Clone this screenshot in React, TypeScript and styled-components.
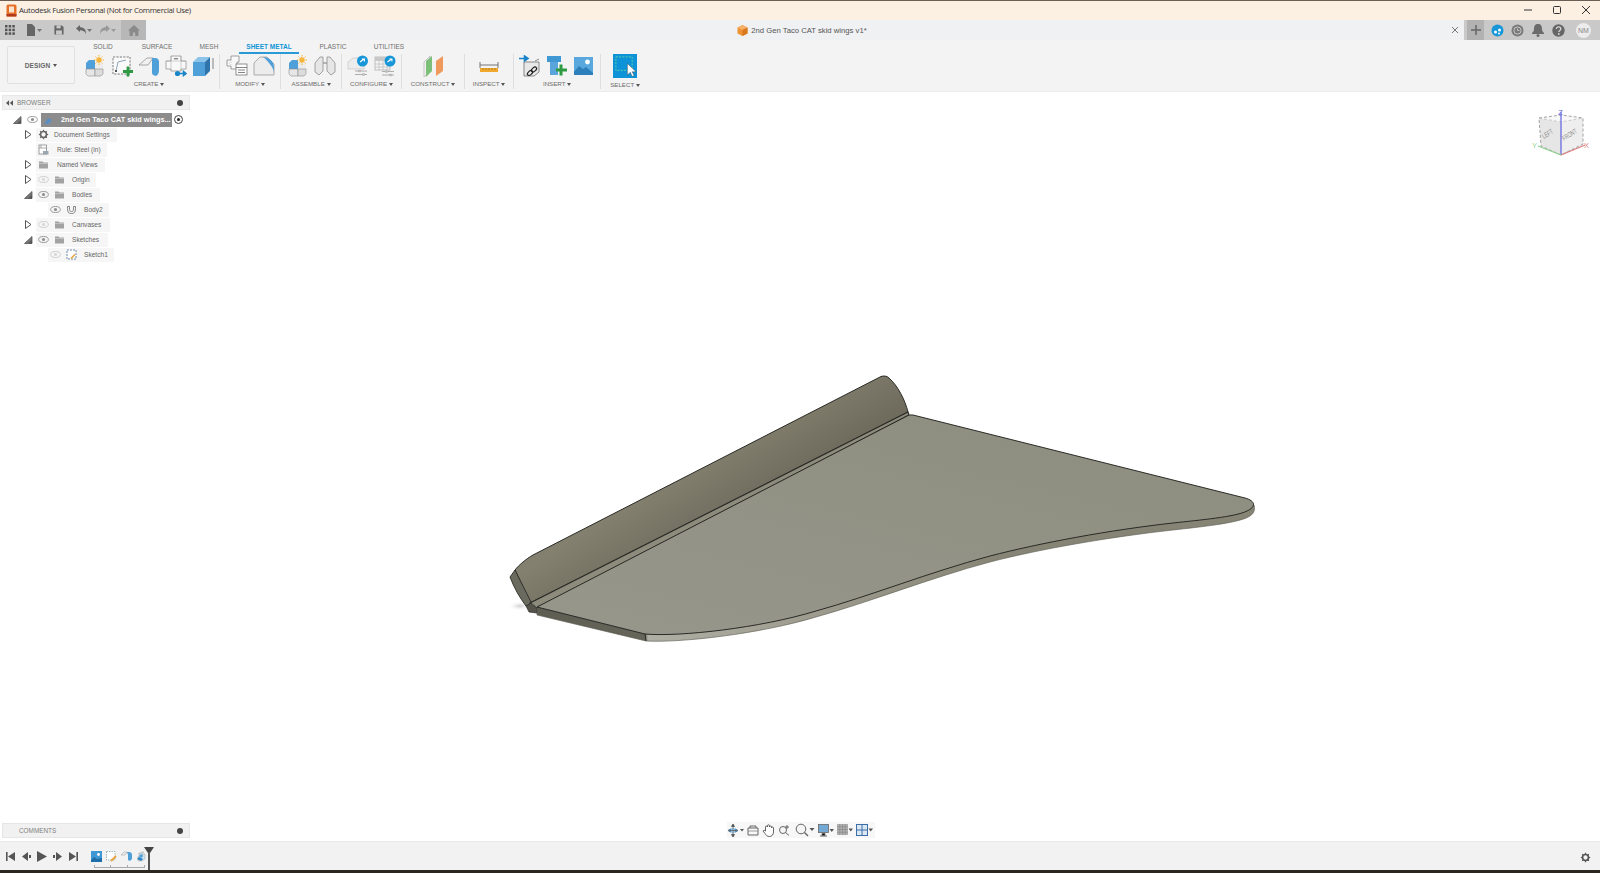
import React from "react";
import styled, { createGlobalStyle } from "styled-components";

const Global = createGlobalStyle`
  html, body { margin: 0; padding: 0; width: 1600px; height: 873px; overflow: hidden; background: #fff; }
  * { box-sizing: border-box; }
  #root { width: 1600px; height: 873px; }
`;

const UI = `"Liberation Sans", Arial, sans-serif`;

const Page = styled.div`
  width: 1600px; height: 873px; display: flex; flex-direction: column;
  font-family: ${UI}; background: #fff; overflow: hidden;
`;

/* ---------- title bar ---------- */
const TitleBar = styled.div`
  height: 20px; flex: none; display: flex; align-items: center; padding: 0 0 1px 6px; gap: 2px;
  background: #fcf0e3; border-top: 1px solid #6b5f55;
`;
const TitleText = styled.span`
  font-family: "Open Sans", sans-serif; font-size: 7.8px; letter-spacing: -.33px; color: #333; flex: 1; white-space: nowrap;
`;
const WinGroup = styled.div`
  display: flex; flex: none;
`;
const WinBtn = styled.div`
  width: 29px; height: 18px; display: flex; align-items: center; justify-content: center;
`;

/* ---------- menu bar ---------- */
const MenuBar = styled.div`
  height: 20px; flex: none; display: flex; background: #c9c9c9;
`;
const MenuLeft = styled.div`
  width: 121px; display: flex; align-items: center; padding-left: 5px;
`;
const MenuIcon = styled.div<{ $w: number }>`
  width: ${(p) => p.$w}px; height: 20px; display: flex; align-items: center; justify-content: flex-start; flex: none;
`;
const HomeTab = styled.div`
  width: 25px; background: #b7b7b7; display: flex; align-items: center; justify-content: center;
`;
const DocTab = styled.div`
  flex: 1; background: #f0f1f3; display: flex; align-items: center; position: relative; justify-content: center; padding-right: 6px; gap: 3px;
`;
const DocTitle = styled.span`
  font-size: 7.7px; color: #555;
`;
const DocClose = styled.div`
  position: absolute; right: 3px; top: 6px; width: 10px; height: 10px; display: flex;
`;
const MenuRight = styled.div`
  width: 136px; display: flex; align-items: center; padding-left: 3px;
`;
const PlusBox = styled.div`
  width: 17px; height: 20px; background: #b2b2b2; display: flex; align-items: center; justify-content: center; margin-right: 3px;
`;
const RoundSlot = styled.div`
  width: 20.5px; display: flex; align-items: center; justify-content: center; flex: none;
`;
const Avatar = styled.div`
  width: 15px; height: 15px; border-radius: 50%; background: #ececec; color: #888; font-size: 7px;
  display: flex; align-items: center; justify-content: center; margin-left: 7px;
`;

/* ---------- ribbon ---------- */
const Ribbon = styled.div`
  height: 52px; flex: none; display: flex; background: #f3f3f3; border-bottom: 1px solid #ececec;
`;
const DesignBtn = styled.div`
  width: 68px; height: 38px; margin: 6px 4px 0 7px; border: 1px solid #e0e0e0; border-radius: 2px; background: #f4f4f4;
  display: flex; align-items: center; justify-content: center; gap: 3px;
  font-size: 6.5px; font-weight: 700; letter-spacing: .1px; color: #666;
`;
const Caret = styled.span`
  display: inline-block; width: 0; height: 0; border-left: 2.2px solid transparent; border-right: 2.2px solid transparent;
  border-top: 3px solid #555; margin-left: 0; vertical-align: middle;
`;
const RibbonBody = styled.div`
  flex: 1; display: flex; flex-direction: column;
`;
const Tabs = styled.div`
  height: 14px; display: flex; padding-left: 6px;
`;
const Tab = styled.div<{ $w: number; $gap?: number; $active?: boolean }>`
  width: ${(p) => p.$w}px; height: 14px; padding-top: 2px; text-align: center; font-size: 6.5px; line-height: 9px;
  margin-left: ${(p) => p.$gap ?? 0}px; white-space: nowrap;
  color: ${(p) => (p.$active ? "#0d96d6" : "#6f6f6f")}; font-weight: ${(p) => (p.$active ? 700 : 400)};
  border-bottom: ${(p) => (p.$active ? "2px solid #2a9ad6" : "none")};
`;
const Groups = styled.div`
  display: flex; height: 37px;
`;
const Group = styled.div<{ $w: number; $last?: boolean }>`
  width: ${(p) => p.$w}px; display: flex; flex-direction: column; align-items: center;
  border-right: ${(p) => (p.$last ? "none" : "1px solid #dedede")};
  margin-bottom: 2px;
`;
const GroupIcons = styled.div`
  height: 24px; display: flex; align-items: center; gap: 5px;
`;
const GroupLabel = styled.div`
  font-size: 6.2px; line-height: 10px; color: #6d6d6d; white-space: nowrap; margin-top: 2px;
`;
const Tool = styled.svg`
  width: 22px; height: 22px; flex: none; display: block;
`;
const BigTool = styled.svg`
  width: 24px; height: 24px; flex: none; display: block;
`;

/* ---------- canvas ---------- */
const Canvas = styled.div`
  flex: 1; position: relative; background: #fff;
`;
const WingSvg = styled.svg`
  position: absolute; left: 0; top: 0; width: 1600px; height: 749px;
`;
const Panel = styled.div`
  position: absolute; left: 2px; width: 188px; height: 15px; background: #f1f1f1; border: 1px solid #e6e6e6;
  display: flex; align-items: center; font-size: 6.4px; color: #7f7f7f;
`;
const BrowserWrap = styled.div`
  position: absolute; left: 2px; top: 3px; width: 190px;
`;
const BrowserHead = styled.div`
  width: 188px; height: 15px; background: #f1f1f1; border: 1px solid #e8e8e8; margin-bottom: 2px;
  display: flex; align-items: center; padding: 0 6px 0 3px; font-size: 6.5px; color: #7f7f7f; gap: 4px;
`;
const HeadText = styled.span`
  flex: 1;
`;
const Dot = styled.div`
  width: 6px; height: 6px; border-radius: 50%; background: #444; flex: none;
`;
const Row = styled.div<{ $indent: number }>`
  height: 15px; display: flex; align-items: center; padding-left: ${(p) => p.$indent}px;
`;
const Expander = styled.div<{ $w?: number }>`
  width: ${(p) => p.$w ?? 14}px; height: 15px; display: flex; align-items: center; flex: none; padding-left: 1px;
`;
const Chip = styled.div<{ $w: number; $labelAt: number }>`
  width: ${(p) => p.$w}px; height: 14px; background: #f6f6f6; display: grid;
  grid-template-columns: ${(p) => p.$labelAt}px 1fr; align-items: center;
  font-size: 6.6px; color: #666; white-space: nowrap;
`;
const ChipIcons = styled.div`
  display: flex; align-items: center; gap: 5px; padding-left: 2px;
`;
const Root = styled.div`
  height: 14px; width: 131px; background: #8c8c8c; color: #fff; font-size: 7.3px; font-weight: 700; margin-left: 3px;
  display: flex; align-items: center; padding-left: 20px; white-space: nowrap; position: relative;
`;
const RootBadge = styled.svg`
  position: absolute; left: 2px; top: 2px; width: 10px; height: 10px;
`;
const Radio = styled.div`
  width: 9px; height: 9px; border: 1px solid #444; border-radius: 50%; display: flex; align-items: center; justify-content: center; background: #fafafa; margin-left: 2px;
`;
const RadioDot = styled.div`
  width: 3px; height: 3px; background: #222; border-radius: 50%;
`;
const Small = styled.svg`
  width: 11px; height: 11px; flex: none; display: block;
`;
const CubeSvg = styled.svg`
  position: absolute; right: 8px; top: 12px; width: 66px; height: 60px;
`;
const NavBar = styled.div`
  position: absolute; left: 727px; bottom: 3px; width: 148px; height: 16px; background: #f7f7f7;
  display: flex; align-items: center; padding-left: 1px; gap: 3px;
`;
const NavItem = styled.div`
  display: flex; align-items: center; flex: none;
`;
const Comments = styled(Panel)`
  bottom: 3px; padding: 0 6px 0 16px; gap: 5px;
`;

/* ---------- timeline ---------- */
const Timeline = styled.div`
  height: 29px; flex: none; background: #f2f2f2; border-top: 1px solid #e8e8e8; display: flex; align-items: center; padding-left: 3px; position: relative;
`;
const Play = styled.div`
  width: 15.6px; display: flex; align-items: center; justify-content: center; flex: none;
`;
const Steps = styled.div`
  display: flex; gap: 4px; margin-left: 10px; position: relative;
`;
const Bracket = styled.div`
  position: absolute; left: 3px; right: 2px; top: 14px; height: 3px; border: 1px solid #aaa; border-top: none;
  background-image: linear-gradient(#aaa, #aaa), linear-gradient(#aaa, #aaa);
  background-size: 1px 3px, 1px 3px;
  background-position: 32% 0, 66% 0;
  background-repeat: no-repeat;
`;
const Marker = styled.svg`
  position: absolute; left: 144px; top: 4px; width: 10px; height: 24px;
`;
const GearSlot = styled.div`
  position: absolute; right: 8px; top: 10px; width: 12px; height: 12px; display: flex;
`;
const TaskStrip = styled.div`
  height: 3px; flex: none; background: #2b2620;
`;

/* ---------- small drawings ---------- */
const EyeIcon = ({ dim }: { dim?: boolean }) => (
  <Small viewBox="0 0 11 11">
    <ellipse cx="5.5" cy="5.5" rx="4.8" ry="3" fill="none" stroke={dim ? "#cfcfcf" : "#9a9a9a"} strokeWidth="1" />
    <circle cx="5.5" cy="5.5" r="1.6" fill={dim ? "#d8d8d8" : "#8f8f8f"} />
  </Small>
);
const Folder = () => (
  <Small viewBox="0 0 11 11">
    <path d="M1 2.5h3.5l1 1H10v6H1z" fill="#a2a2a2" />
    <path d="M1 4.5h9" stroke="#d5d5d5" strokeWidth=".6" />
  </Small>
);
const Closed = () => (
  <Small viewBox="0 0 11 11">
    <path d="M2.5 1.5v8l5.5-4z" fill="#fff" stroke="#555" strokeWidth="1" />
  </Small>
);
const Opened = () => (
  <Small viewBox="0 0 11 11">
    <path d="M1.5 9.5L9 2.5v7z" fill="#777" stroke="#555" strokeWidth=".8" />
    <path d="M5 9.5L9 5.8v3.7z" fill="#555" />
  </Small>
);
const Gear = ({ c = "#666" }: { c?: string }) => (
  <Small viewBox="0 0 11 11">
    <circle cx="5.5" cy="5.5" r="3" fill="none" stroke={c} strokeWidth="1.7" />
    <path d="M5.5 .8v1.6M5.5 8.6v1.6M.8 5.5h1.6M8.6 5.5h1.6M2.2 2.2l1.1 1.1M7.7 7.7l1.1 1.1M8.8 2.2L7.7 3.3M3.3 7.7L2.2 8.8" stroke={c} strokeWidth="1.2" />
  </Small>
);

const NewComp = () => (
  <Tool viewBox="0 0 22 22">
    <path d="M11 7.500h8v6.500h-8z" fill="#ececec" />
    <path d="M2 8l3-3h6v9H2z" fill="#4f9fd9" />
    <path d="M2 14h9v7H4l-2-2z" fill="#e6e6e6" stroke="#8f8f8f" strokeWidth=".6" />
    <path d="M11 14h8v5l-2 2h-6z" fill="#dcdcdc" stroke="#8f8f8f" strokeWidth=".6" />
    <circle cx="15" cy="5" r="2.700" fill="#f5b43a" />
    <path d="M15 0v1.500M15 8.500V10M10 5h1.500M18.500 5H20M11.500 1.500l1 1M17.500 7.500l1 1M18.500 1.500l-1 1M12.500 7.500l-1 1" stroke="#f5b43a" strokeWidth="1" />
  </Tool>
);

const Icons = {
  sketch: (
    <Tool viewBox="0 0 22 22">
      <rect x="2" y="2" width="17" height="17" fill="#fafafa" stroke="#6e6e6e" strokeWidth=".9" strokeDasharray="2.2 1.2" />
      <path d="M5 16L7 7 15 5" fill="none" stroke="#8fa6b6" strokeWidth="1" />
      <rect x="4" y="15" width="2" height="2" fill="#555" />
      <path d="M17 11.5v10M12 16.5h10" stroke="#2d9a42" strokeWidth="2.8" />
    </Tool>
  ),
  flange: (
    <Tool viewBox="0 0 22 22">
      <path d="M1 10l8-7h6l-5 7z" fill="#f1f1f1" stroke="#888" strokeWidth=".7" />
      <path d="M14 3h3c3 0 4 2 4 4v8c0 3-1 5-3 6l-3-1c-1-1-1-2-1-4V9c0-3 0-5 0-6z" fill="#4f9fd9" />
    </Tool>
  ),
  unfold: (
    <Tool viewBox="0 0 22 22">
      <path d="M6 1h10v5h5v8h-5v2H6v-2H1V6h5z" fill="#f8f8f8" stroke="#8a8a8a" strokeWidth=".7" />
      <path d="M1 6h20M6 1v15M16 1v15" stroke="#a8a8a8" strokeWidth=".5" />
      <rect x="9" y="3" width="4" height="1.4" fill="#888" />
      <circle cx="12.5" cy="18.5" r="2.6" fill="#1b85c9" />
      <path d="M14 18.5h7M21 18.5l-2.5-2v4z" stroke="#1b85c9" strokeWidth="1.6" fill="#1b85c9" />
    </Tool>
  ),
  box: (
    <Tool viewBox="0 0 22 22">
      <path d="M1 7h12v14H1z" fill="#4f9fd9" />
      <path d="M1 7l5-5h12l-5 5z" fill="#8cc4ea" />
      <path d="M13 7l5-5v14l-5 5z" fill="#2f75ab" />
      <path d="M21 3v11" stroke="#777" strokeWidth=".9" />
    </Tool>
  ),
  flat: (
    <Tool viewBox="0 0 22 22">
      <path d="M5 1h8v6h-2v7H5v-3H1V5h4z" fill="#f8f8f8" stroke="#8a8a8a" strokeWidth=".8" />
      <path d="M5 5v6M1 8h4" stroke="#aaa" strokeWidth=".5" strokeDasharray="1 1" />
      <rect x="10" y="9" width="11" height="11" fill="#fff" stroke="#777" strokeWidth=".8" />
      <path d="M10 12.5h11M12 15h7M12 17.5h7" stroke="#777" strokeWidth=".9" />
    </Tool>
  ),
  corner: (
    <Tool viewBox="0 0 22 22">
      <path d="M1 20V8l6-6h7l7 7v11z" fill="#ececec" stroke="#9a9a9a" strokeWidth=".8" />
      <path d="M10 2c6 0 11 4 11 11v4c-1-5-6-11-11-15z" fill="#4f9fd9" />
    </Tool>
  ),
  joint: (
    <Tool viewBox="0 0 22 22">
      <path d="M1 8l5-6h3v14l-4 4-4-3z" fill="#e6e6e6" stroke="#8d8d8d" strokeWidth=".8" />
      <path d="M21 8l-5-6h-3v14l4 4 4-3z" fill="#e6e6e6" stroke="#8d8d8d" strokeWidth=".8" />
      <path d="M9 8h4" stroke="#9a9a9a" strokeWidth="1.4" />
    </Tool>
  ),
  cfg1: (
    <Tool viewBox="0 0 22 22">
      <path d="M1 7l5-4h11v11H1z" fill="#ececec" stroke="#c4c4c4" strokeWidth=".7" />
      <path d="M8 16h12M8 19.5h12" stroke="#9b9b9b" strokeWidth=".8" />
      <rect x="11" y="14.8" width="3" height="2.4" fill="#bcbcbc" />
      <rect x="15" y="18.3" width="3" height="2.4" fill="#bcbcbc" />
      <circle cx="15.5" cy="6" r="5.5" fill="#1796d8" />
      <path d="M13 7l4-3M15 4h2.4v2.4" stroke="#fff" strokeWidth="1.1" fill="none" />
    </Tool>
  ),
  cfg2: (
    <Tool viewBox="0 0 22 22">
      <rect x="1" y="2" width="15" height="13" fill="#f3f3f3" stroke="#aaa" strokeWidth=".7" />
      <path d="M1 5.5h15M1 9h15M1 12h15M5 2v13M9 2v13M13 2v13" stroke="#b5b5b5" strokeWidth=".6" />
      <rect x="1" y="2" width="15" height="3.4" fill="#c8c8c8" />
      <path d="M8 16.5h12M8 20h12" stroke="#9b9b9b" strokeWidth=".8" />
      <rect x="11" y="15.3" width="3" height="2.4" fill="#bcbcbc" />
      <rect x="15" y="18.8" width="3" height="2.4" fill="#bcbcbc" />
      <circle cx="16" cy="6" r="5.5" fill="#1796d8" />
      <path d="M13.5 7l4-3M15.5 4h2.4v2.4" stroke="#fff" strokeWidth="1.1" fill="none" />
    </Tool>
  ),
  planes: (
    <Tool viewBox="0 0 22 22">
      <path d="M2 7l6-6v15l-6 6z" fill="#f1f1f1" stroke="#aaa" strokeWidth=".6" />
      <path d="M4 6l6-5v15l-6 6z" fill="#7bbf79" />
      <path d="M14 6l7-5v15l-7 5z" fill="#ef9a5c" />
    </Tool>
  ),
  ruler: (
    <Tool viewBox="0 0 22 22">
      <path d="M2 7v6M20 7v6M2 10h18" stroke="#666" strokeWidth=".9" />
      <rect x="2" y="13" width="18" height="4" fill="#f0a92e" />
      <path d="M5 13v2M8 13v2M11 13v2M14 13v2M17 13v2" stroke="#9a6d16" strokeWidth=".6" />
    </Tool>
  ),
  deriveLink: (
    <Tool viewBox="0 0 22 22">
      <path d="M5 7h15v10l-5 4H5z" fill="#e8e8e8" stroke="#6f6f6f" strokeWidth=".8" />
      <path d="M0 3.5h9M9 3.5L5.5 1v5z" stroke="#1b85c9" fill="#1b85c9" strokeWidth="1.6" />
      <path d="M16 6l4-2" stroke="#6f6f6f" strokeWidth=".8" />
      <ellipse cx="11" cy="18" rx="3" ry="1.8" transform="rotate(-40 11 18)" fill="none" stroke="#222" strokeWidth="1.2" />
      <ellipse cx="15" cy="14.5" rx="3" ry="1.8" transform="rotate(-40 15 14.5)" fill="none" stroke="#222" strokeWidth="1.2" />
    </Tool>
  ),
  bolt: (
    <Tool viewBox="0 0 22 22">
      <path d="M1 1h14v6H1z" fill="#3f97d4" />
      <path d="M4 7h8v13H4z" fill="#5ba5dd" />
      <path d="M15 9.5v11M10 15h11" stroke="#2d9a42" strokeWidth="3" />
    </Tool>
  ),
  image: (
    <Tool viewBox="0 0 22 22">
      <rect x="1" y="2" width="19" height="18" fill="#58a7dd" />
      <circle cx="14.5" cy="7" r="2.4" fill="#fff" />
      <path d="M1 17l5-6 4 3 3-2 7 6v2H1z" fill="#2c7fba" />
    </Tool>
  ),
};

const Wing = () => (
  <WingSvg viewBox="0 92 1600 749">
    <defs>
      <linearGradient id="plate" x1="0.1" y1="1" x2="0.9" y2="0">
        <stop offset="0" stopColor="#96968b" />
        <stop offset="1" stopColor="#8d8d7f" />
      </linearGradient>
      <linearGradient id="flange" gradientUnits="userSpaceOnUse" x1="690" y1="465" x2="725" y2="520">
        <stop offset="0" stopColor="#84806f" />
        <stop offset="1" stopColor="#6f6c5e" />
      </linearGradient>
      <linearGradient id="strip" gradientUnits="userSpaceOnUse" x1="540" y1="0" x2="1000" y2="0">
        <stop offset="0" stopColor="#5f5e53" />
        <stop offset="0.228" stopColor="#66655a" />
        <stop offset="0.235" stopColor="#b0afa4" />
        <stop offset="1" stopColor="#868575" />
      </linearGradient>
      <radialGradient id="shadow">
        <stop offset="0" stopColor="#cfcfcf" />
        <stop offset="1" stopColor="#ffffff" stopOpacity="0" />
      </radialGradient>
    </defs>
    <ellipse cx="520" cy="606" rx="12" ry="5" fill="url(#shadow)" />
    <path d="M515 570C519 565 526 559 533 555L881 376.5C884 375.5 887 376 889 378C898 386 905 400 908 412L530 603Z" fill="url(#flange)" stroke="#2a2a26" strokeWidth="1" strokeLinejoin="round" />
    <path d="M515 570L510 577C514 588 520 598 526 606L532 604Z" fill="#6a6a5f" stroke="#2a2a26" strokeWidth=".9" strokeLinejoin="round" />
    <path d="M530 603L908 412L909 415L537 608L530 607Z" fill="#8d8c7c" stroke="#2a2a26" strokeWidth="1.100" strokeLinejoin="round" />
    <path d="M526 606L531 603L537 608L537 613L529 612Z" fill="#55544b" stroke="#2a2a26" strokeWidth=".7" />
    <path d="M537 607L537 615L646 641C680 643 760 634 816 617C870 602 930 578 990 562C1040 549 1110 537 1173 530C1200 527 1240 523 1250 516C1255 513 1255 508 1254 505L1240 505L1000 540L646 630Z" fill="url(#strip)" stroke="#55554c" strokeWidth=".6" strokeLinejoin="round" />
    <path d="M537 607L645 634C680 637 760 628 816 611C870 596 930 572 990 556C1040 543 1110 530 1173 523C1200 520 1235 517 1247 511C1256 507 1256 501 1245 498L913 415L909 415Z" fill="url(#plate)" stroke="#2a2a26" strokeWidth="1" strokeLinejoin="round" />
    <path d="M645 634L646 641" stroke="#2a2a26" strokeWidth="1" />
  </WingSvg>
);

const ViewCube = () => (
  <CubeSvg viewBox="1526 104 66 60">
    <path d="M1561 122L1583 118V144L1561 155Z" fill="#eeeeee" />
    <path d="M1561 122L1539 118L1541 146L1561 155Z" fill="#e6e6e6" />
    <path d="M1539 118L1561 115L1583 118L1561 122Z" fill="#f8f8f8" />
    <path d="M1539 118L1561 115L1583 118V144L1561 155L1541 146Z" fill="none" stroke="#999" strokeWidth=".9" strokeDasharray="3 2" />
    <path d="M1539 118L1561 122L1583 118" fill="none" stroke="#aaa" strokeWidth=".6" strokeDasharray="3 2" />
    <path d="M1561 112V155" stroke="#6b6ce0" strokeWidth="1.300" />
    <path d="M1561 155L1585 145" stroke="#d87b7b" strokeWidth="1.300" />
    <path d="M1561 155L1538 146" stroke="#8ed08e" strokeWidth="1.300" />
    <text x="1558" y="115" fontSize="8" fill="#6b6ce0" fontFamily="Liberation Sans">Z</text>
    <text x="1584" y="148" fontSize="7.500" fill="#dd8a8a" fontFamily="Liberation Sans">X</text>
    <text x="1532" y="148" fontSize="7.500" fill="#92d692" fontFamily="Liberation Sans">Y</text>
    <text fontSize="5.500" fill="#8f8f8f" fontFamily="Liberation Sans" transform="translate(1544 139) rotate(-33) scale(.85 1.300)">LEFT</text>
    <text fontSize="5.500" fill="#8f8f8f" fontFamily="Liberation Sans" transform="translate(1564 141) rotate(-32) scale(.85 1.300)">FRONT</text>
  </CubeSvg>
);

const rows: { label: string; w: number; at: number; indent: number; exp?: "c" | "o"; eye?: "on" | "dim"; icon: React.ReactNode }[] = [
  { label: "Document Settings", w: 81, at: 18, indent: 22, exp: "c", icon: <Gear /> },
  {
    label: "Rule: Steel (in)", w: 71, at: 21, indent: 22, icon: (
      <Small viewBox="0 0 11 11">
        <rect x="1" y="1" width="7.5" height="9" fill="#fff" stroke="#888" strokeWidth=".8" />
        <path d="M1 4h7.5M3 1v3" stroke="#888" strokeWidth=".7" />
        <rect x="5" y="7" width="5.5" height="3.5" fill="#9aa7b3" />
      </Small>
    ),
  },
  { label: "Named Views", w: 69, at: 21, indent: 22, exp: "c", icon: <Folder /> },
  { label: "Origin", w: 60, at: 36, indent: 22, exp: "c", eye: "dim", icon: <Folder /> },
  { label: "Bodies", w: 64, at: 36, indent: 22, exp: "o", eye: "on", icon: <Folder /> },
  {
    label: "Body2", w: 61, at: 36, indent: 48, eye: "on", icon: (
      <Small viewBox="0 0 11 11">
        <path d="M1.5 2.5C1.5 8 2 9.5 5.5 9.5S9.5 8 9.5 2.5H7.5c0 4 0 5-2 5s-2-1-2-5z" fill="#f3f3f3" stroke="#777" strokeWidth=".9" />
      </Small>
    ),
  },
  { label: "Canvases", w: 74, at: 36, indent: 22, exp: "c", eye: "dim", icon: <Folder /> },
  { label: "Sketches", w: 72, at: 36, indent: 22, exp: "o", eye: "on", icon: <Folder /> },
  {
    label: "Sketch1", w: 66, at: 36, indent: 48, eye: "dim", icon: (
      <Small viewBox="0 0 11 11">
        <rect x="1" y="1" width="9" height="9" fill="#fff" stroke="#4c6e9c" strokeWidth=".8" strokeDasharray="2 1" />
        <path d="M5 9.5l4-4" stroke="#e8a33a" strokeWidth="1.6" />
      </Small>
    ),
  },
];

export default function App() {
  return (
    <Page>
      <Global />
      <TitleBar>
        <svg width="11" height="13" viewBox="0 0 11 13">
          <rect x=".5" y=".5" width="10" height="12" rx="1.5" fill="#e5702a" />
          <rect x="3" y="2.5" width="5" height="6" fill="#fbe4cf" />
          <rect x=".5" y="10" width="10" height="2.5" fill="#b23a18" />
        </svg>
        <TitleText>Autodesk Fusion Personal (Not for Commercial Use)</TitleText>
        <WinGroup>
          <WinBtn>
            <svg width="10" height="10"><path d="M1 5h8" stroke="#333" strokeWidth="1" /></svg>
          </WinBtn>
          <WinBtn>
            <svg width="10" height="10"><rect x="1.500" y="1.500" width="7" height="7" rx="1" fill="none" stroke="#333" strokeWidth="1" /></svg>
          </WinBtn>
          <WinBtn>
            <svg width="10" height="10"><path d="M1 1l8 8M9 1L1 9" stroke="#333" strokeWidth="1" /></svg>
          </WinBtn>
        </WinGroup>
      </TitleBar>

      <MenuBar>
        <MenuLeft>
          <MenuIcon $w={21}>
            <svg width="10" height="10" viewBox="0 0 12 12" fill="#555">
              {[0, 4.4, 8.8].flatMap((x) => [0, 4.4, 8.8].map((y) => <rect key={`${x}-${y}`} x={x} y={y} width="3" height="3" />))}
            </svg>
          </MenuIcon>
          <MenuIcon $w={28}>
            <svg width="17" height="12" viewBox="0 0 17 12">
              <path d="M1 0h5l3 3v9H1z" fill="#666" />
              <path d="M11 5h5l-2.500 3z" fill="#777" />
            </svg>
          </MenuIcon>
          <MenuIcon $w={21}>
            <svg width="10" height="10" viewBox="0 0 12 12">
              <path d="M.5.5h9l2 2v9H.5z" fill="#666" />
              <rect x="3" y=".5" width="5" height="3.5" fill="#c9c9c9" />
              <rect x="2.500" y="6.500" width="7" height="5" fill="#c9c9c9" />
            </svg>
          </MenuIcon>
          <MenuIcon $w={24}>
            <svg width="18" height="12" viewBox="0 0 18 12">
              <path d="M1 4.500l4-3.500v2.200c4 0 6 2 6 7-1-3-3-4-6-4V8z" fill="#666" />
              <path d="M12 5h5l-2.500 3z" fill="#777" />
            </svg>
          </MenuIcon>
          <MenuIcon $w={18}>
            <svg width="18" height="12" viewBox="0 0 18 12">
              <path d="M11 4.500L7 1v2.200C3 3.200 1 5.200 1 10.200c1-3 3-4 6-4V8z" fill="#989898" />
              <path d="M12 5h5l-2.500 3z" fill="#9a9a9a" />
            </svg>
          </MenuIcon>
        </MenuLeft>
        <HomeTab>
          <svg width="12" height="11" viewBox="0 0 12 11"><path d="M6 0l6 5.500h-1.600V11H7.200V7.500H4.800V11H1.600V5.500H0z" fill="#8a8a8a" /></svg>
        </HomeTab>
        <DocTab>
          <svg width="11" height="11" viewBox="0 0 11 11">
            <path d="M5.500 0l5 2.500v6L5.500 11l-5-2.500v-6z" fill="#ee9233" />
            <path d="M.5 2.500l5 2.500 5-2.500-5-2.500z" fill="#f7b26a" />
            <path d="M5.500 5v6l5-2.500v-6z" fill="#d9791f" />
          </svg>
          <DocTitle>2nd Gen Taco CAT skid wings v1*</DocTitle>
          <DocClose>
            <svg width="9" height="9"><path d="M1 1l6 6M7 1L1 7" stroke="#777" strokeWidth="1" /></svg>
          </DocClose>
        </DocTab>
        <MenuRight>
          <PlusBox>
            <svg width="10" height="10"><path d="M5 0v10M0 5h10" stroke="#666" strokeWidth="1.500" /></svg>
          </PlusBox>
          <RoundSlot>
            <svg width="13" height="13" viewBox="0 0 13 13">
              <circle cx="6.500" cy="6.500" r="6" fill="#1796d8" />
              <circle cx="4.500" cy="8" r="1.500" fill="#fff" />
              <circle cx="8.500" cy="6" r="1.500" fill="#fff" />
              <circle cx="8" cy="9.500" r="1" fill="#fff" />
            </svg>
          </RoundSlot>
          <RoundSlot>
            <svg width="13" height="13" viewBox="0 0 13 13">
              <circle cx="6.500" cy="6.500" r="6" fill="#7a7a7a" />
              <circle cx="6.500" cy="6.500" r="3.600" fill="none" stroke="#c9c9c9" strokeWidth="1" />
              <path d="M6.500 4.500v2h2" stroke="#c9c9c9" fill="none" strokeWidth=".9" />
            </svg>
          </RoundSlot>
          <RoundSlot>
            <svg width="12" height="13" viewBox="0 0 12 13">
              <path d="M6 0c3 0 4 2 4 5 0 2 1 3 2 4v1H0V9c1-1 2-2 2-4 0-3 1-5 4-5z" fill="#6b6b6b" />
              <circle cx="6" cy="11.500" r="1.500" fill="#6b6b6b" />
            </svg>
          </RoundSlot>
          <RoundSlot>
            <svg width="13" height="13" viewBox="0 0 13 13">
              <circle cx="6.500" cy="6.500" r="6.200" fill="#666" />
              <path d="M4.400 5c0-1.400 1-2.200 2.200-2.200S8.800 3.600 8.800 4.900c0 1.500-2 1.600-2 3.100" fill="none" stroke="#d5d5d5" strokeWidth="1.300" />
              <circle cx="6.800" cy="10" r=".9" fill="#d5d5d5" />
            </svg>
          </RoundSlot>
          <Avatar>NM</Avatar>
        </MenuRight>
      </MenuBar>

      <Ribbon>
        <DesignBtn>DESIGN <Caret /></DesignBtn>
        <RibbonBody>
          <Tabs>
            <Tab $w={36}>SOLID</Tab>
            <Tab $w={72}>SURFACE</Tab>
            <Tab $w={32}>MESH</Tab>
            <Tab $w={60} $gap={14} $active>SHEET METAL</Tab>
            <Tab $w={68}>PLASTIC</Tab>
            <Tab $w={44}>UTILITIES</Tab>
          </Tabs>
          <Groups>
            <Group $w={141}>
              <GroupIcons><NewComp />{Icons.sketch}{Icons.flange}{Icons.unfold}{Icons.box}</GroupIcons>
              <GroupLabel>CREATE <Caret /></GroupLabel>
            </Group>
            <Group $w={61}>
              <GroupIcons>{Icons.flat}{Icons.corner}</GroupIcons>
              <GroupLabel>MODIFY <Caret /></GroupLabel>
            </Group>
            <Group $w={61}>
              <GroupIcons><NewComp />{Icons.joint}</GroupIcons>
              <GroupLabel>ASSEMBLE <Caret /></GroupLabel>
            </Group>
            <Group $w={60}>
              <GroupIcons>{Icons.cfg1}{Icons.cfg2}</GroupIcons>
              <GroupLabel>CONFIGURE <Caret /></GroupLabel>
            </Group>
            <Group $w={63}>
              <GroupIcons>{Icons.planes}</GroupIcons>
              <GroupLabel>CONSTRUCT <Caret /></GroupLabel>
            </Group>
            <Group $w={49}>
              <GroupIcons>{Icons.ruler}</GroupIcons>
              <GroupLabel>INSPECT <Caret /></GroupLabel>
            </Group>
            <Group $w={87}>
              <GroupIcons>{Icons.deriveLink}{Icons.bolt}{Icons.image}</GroupIcons>
              <GroupLabel>INSERT <Caret /></GroupLabel>
            </Group>
            <Group $w={48} $last>
              <GroupIcons>
                <BigTool viewBox="0 0 25 25">
                  <rect width="25" height="25" fill="#0f93d8" />
                  <rect x="3" y="3" width="17" height="14" fill="none" stroke="#5cd0a8" strokeWidth="1" strokeDasharray="2 1.400" />
                  <path d="M15 10v12l3-3 2 4.500 2-1-2-4h4z" fill="#fff" stroke="#333" strokeWidth=".4" />
                </BigTool>
              </GroupIcons>
              <GroupLabel>SELECT <Caret /></GroupLabel>
            </Group>
          </Groups>
        </RibbonBody>
      </Ribbon>

      <Canvas>
        <Wing />
        <BrowserWrap>
          <BrowserHead>
            <svg width="7" height="6" viewBox="0 0 9 7"><path d="M4 0v7L0 3.500zM9 0v7L5 3.500z" fill="#555" /></svg>
            <HeadText>BROWSER</HeadText>
            <Dot />
          </BrowserHead>
          <Row $indent={9}>
            <Expander $w={16}><Opened /></Expander>
            <EyeIcon />
            <Root>
              <RootBadge viewBox="0 0 10 10"><path d="M1 9l4-6 4 2-3 4z" fill="#5c8fbf" /></RootBadge>
              2nd Gen Taco CAT skid wings...
            </Root>
            <Radio><RadioDot /></Radio>
          </Row>
          {rows.map((r) => (
            <Row key={r.label} $indent={r.indent - 2}>
              {r.indent === 22 && <Expander>{r.exp === "c" ? <Closed /> : r.exp === "o" ? <Opened /> : null}</Expander>}
              <Chip $w={r.w} $labelAt={r.at}>
                <ChipIcons>
                  {r.eye && <EyeIcon dim={r.eye === "dim"} />}
                  {r.icon}
                </ChipIcons>
                <span>{r.label}</span>
              </Chip>
            </Row>
          ))}
        </BrowserWrap>
        <ViewCube />
        <NavBar>
          <NavItem>
            <svg width="16" height="13" viewBox="0 0 16 13">
              <path d="M5 1v11M0 6.500h10M5 0L3.500 2.500h3zM5 13l-1.500-2.500h3zM0 6.500l2.500-1.500v3zM10 6.500L7.500 5v3z" stroke="#555" strokeWidth=".8" fill="#555" />
              <ellipse cx="5" cy="6.500" rx="4" ry="1.600" fill="none" stroke="#4f9fd9" strokeWidth="1" />
              <path d="M12 5h4l-2 2.500z" fill="#555" />
            </svg>
          </NavItem>
          <NavItem>
            <svg width="12" height="12" viewBox="0 0 12 12">
              <path d="M1 4h10v7H1zM3 4V2h6v2" fill="none" stroke="#666" strokeWidth="1" />
              <path d="M1 7h10" stroke="#888" strokeWidth=".8" />
            </svg>
          </NavItem>
          <NavItem>
            <svg width="13" height="13" viewBox="0 0 13 13">
              <path d="M3.500 7V3a1 1 0 0 1 2 0V1.800a1 1 0 0 1 2 0V3a1 1 0 0 1 2 0v1a1 1 0 0 1 2 0v4c0 3-2 4.500-4 4.500-2.500 0-3.500-1.500-4.500-3L1 7c.5-1 1.500-.8 2.500 0z" fill="#fff" stroke="#555" strokeWidth=".9" />
            </svg>
          </NavItem>
          <NavItem>
            <svg width="12" height="12" viewBox="0 0 12 12">
              <circle cx="5" cy="6" r="3.500" fill="none" stroke="#666" strokeWidth="1" />
              <path d="M7.500 8.500L11 11.500M9 1v4M7 3h4" stroke="#666" strokeWidth="1" />
            </svg>
          </NavItem>
          <NavItem>
            <svg width="22" height="14" viewBox="0 0 22 14">
              <circle cx="8" cy="6" r="4.800" fill="#f5f5f5" stroke="#666" strokeWidth="1" />
              <path d="M11.500 9.500L15 13" stroke="#666" strokeWidth="1.400" />
              <path d="M16.500 5h5L19 8z" fill="#555" />
            </svg>
          </NavItem>
          <NavItem>
            <svg width="16" height="13" viewBox="0 0 16 13">
              <rect x=".5" y=".5" width="10" height="8" fill="#74a9d6" stroke="#666" strokeWidth=".8" />
              <path d="M4 9.500h3v2H4zM2 12h7" stroke="#666" strokeWidth="1" />
              <path d="M11.500 5H16l-2.250 3z" fill="#555" />
            </svg>
          </NavItem>
          <NavItem>
            <svg width="16" height="12" viewBox="0 0 16 12">
              <rect x="0" y="0" width="11" height="11" fill="#b0b0b0" />
              <path d="M2.750 0v11M5.500 0v11M8.250 0v11M0 2.750h11M0 5.500h11M0 8.250h11" stroke="#8a8a8a" strokeWidth=".7" />
              <path d="M11.500 4.500H16l-2.250 3z" fill="#555" />
            </svg>
          </NavItem>
          <NavItem>
            <svg width="17" height="12" viewBox="0 0 17 12">
              <rect x=".5" y=".5" width="11" height="11" fill="#dbe7f3" stroke="#3a6fa8" strokeWidth="1" />
              <path d="M6 .5v11M.5 6h11" stroke="#3a6fa8" strokeWidth="1" />
              <path d="M12.500 4.500H17l-2.250 3z" fill="#555" />
            </svg>
          </NavItem>
        </NavBar>
        <Comments>
          <HeadText>COMMENTS</HeadText>
          <Dot />
        </Comments>
      </Canvas>

      <Timeline>
        <Play>
          <svg width="9" height="9" viewBox="0 0 9 9"><path d="M0 0h1.600v9H0zM9 0v9L2 4.500z" fill="#555" /></svg>
        </Play>
        <Play>
          <svg width="9" height="9" viewBox="0 0 9 9"><path d="M6 0v9L0 4.500zM7 3h2v3H7z" fill="#555" /></svg>
        </Play>
        <Play>
          <svg width="10" height="11" viewBox="0 0 10 11"><path d="M0 0v11l10-5.500z" fill="#555" /></svg>
        </Play>
        <Play>
          <svg width="9" height="9" viewBox="0 0 9 9"><path d="M3 0v9l6-4.500zM0 3h2v3H0z" fill="#555" /></svg>
        </Play>
        <Play>
          <svg width="9" height="9" viewBox="0 0 9 9"><path d="M9 0H7.400v9H9zM0 0v9l7-4.500z" fill="#555" /></svg>
        </Play>
        <Steps>
          <Bracket />
          <svg width="11" height="11" viewBox="0 0 11 11"><rect width="11" height="11" fill="#3f97d4" /><circle cx="7.500" cy="3.500" r="1.400" fill="#fff" /><path d="M0 9l3-3 3 2 5-1v4H0z" fill="#1f6ea8" /></svg>
          <svg width="11" height="11" viewBox="0 0 11 11"><rect x=".5" y=".5" width="8.500" height="8.500" fill="#fff" stroke="#8aa" strokeWidth=".8" strokeDasharray="1.500 1" /><path d="M5 10l5-5" stroke="#eba23a" strokeWidth="1.800" /></svg>
          <svg width="11" height="11" viewBox="0 0 11 11"><path d="M0 4l3-3h3L4 4z" fill="#eee" stroke="#999" strokeWidth=".5" /><path d="M6 1h2c2 0 3 1 3 3v4l-2 2-2-1V4z" fill="#4f9fd9" /></svg>
          <svg width="11" height="11" viewBox="0 0 11 11"><path d="M2 3l3-2h3l-2 2zM6 3h3v5L6 10H2V5h4z" fill="#cfe0ee" stroke="#999" strokeWidth=".4" /><path d="M1 8l2-2 4 2-2 2z" fill="#2b86c7" /><circle cx="5" cy="5" r="1.800" fill="#4f9fd9" /></svg>
        </Steps>
        <Marker viewBox="0 0 10 24">
          <path d="M0 1h10L6 7H4z" fill="#444" />
          <rect x="4" y="6" width="2" height="18" fill="#555" />
        </Marker>
        <GearSlot><Gear c="#555" /></GearSlot>
      </Timeline>
      <TaskStrip />
    </Page>
  );
}
